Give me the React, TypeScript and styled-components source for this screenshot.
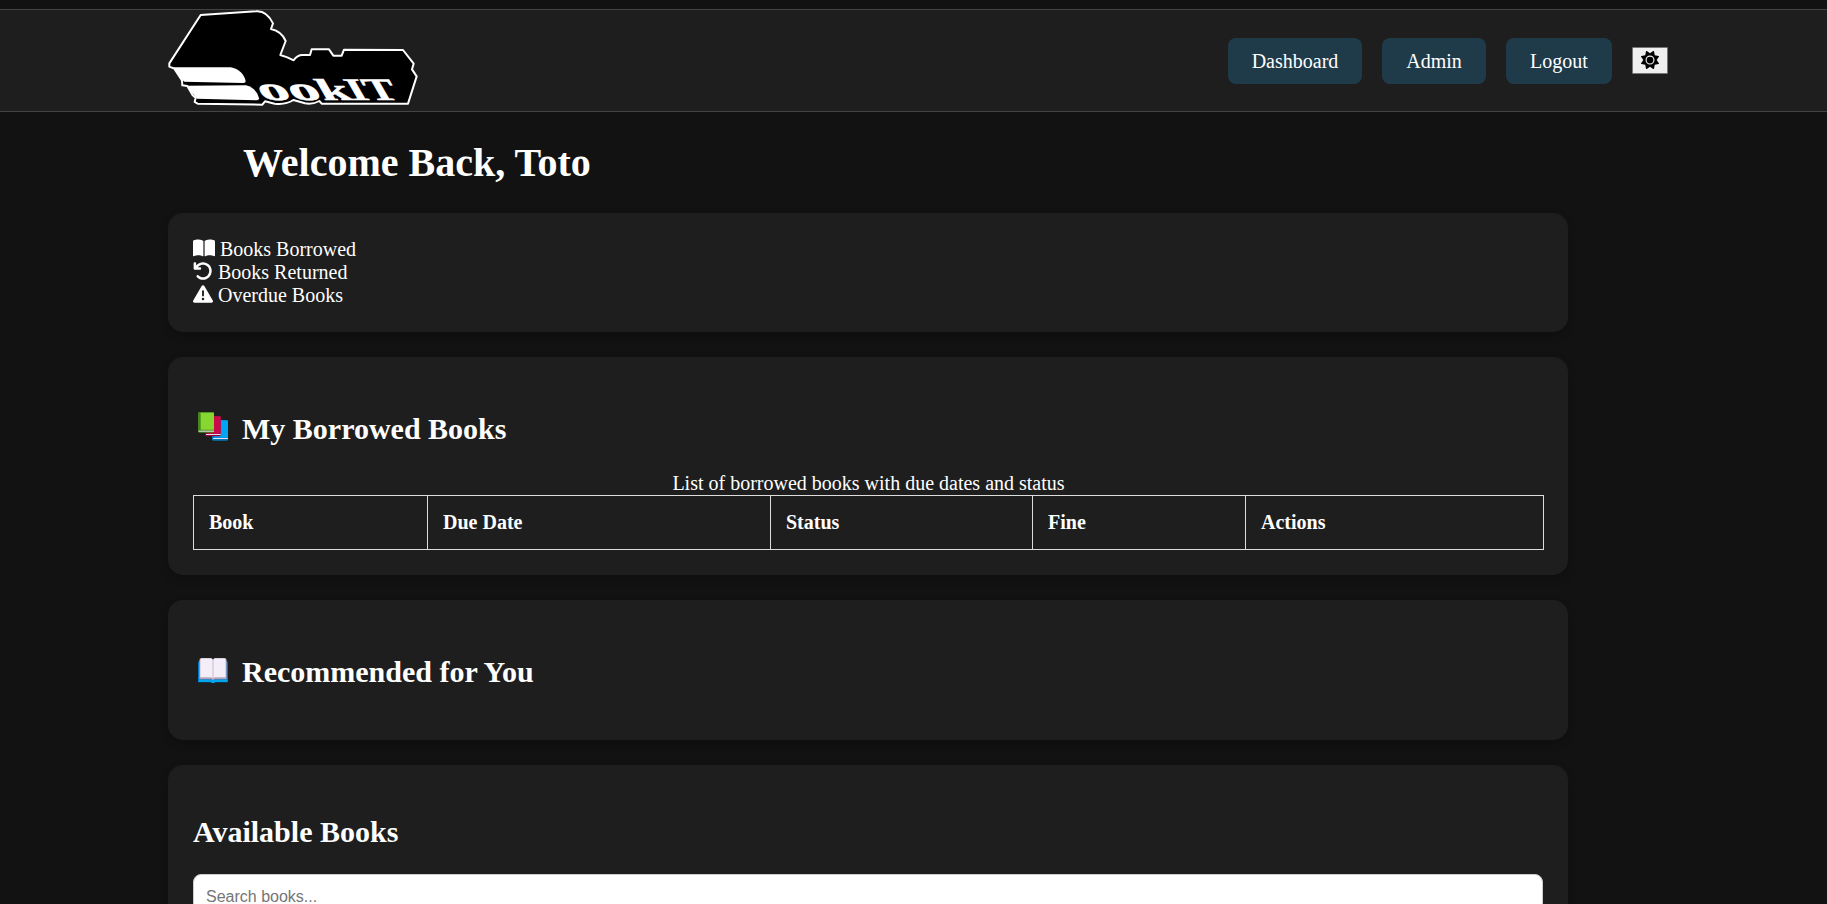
import React from "react";
import styled, { createGlobalStyle } from "styled-components";
import { FaBookOpen, FaArrowRotateLeft, FaTriangleExclamation, FaSun } from "react-icons/fa6";

const GlobalStyle = createGlobalStyle`
  html { background: #121212; }
  body {
    margin: 0;
    background: #121212;
    color: #fff;
    font-family: "Liberation Serif", "Times New Roman", serif;
    font-size: 20px;
    overflow: hidden;
  }
  * { box-sizing: border-box; }
`;

const Page = styled.div`
  height: 904px;
  padding-top: 9px;
  overflow: hidden;
`;

const NavBar = styled.nav`
  display: flex;
  align-items: center;
  justify-content: space-between;
  height: 103px;
  padding: 0 159px 0 168px;
  background: #1e1e1e;
  border: solid #444;
  border-width: 1px 0;
`;

const LogoArt = styled.svg`
  display: block;
  width: 250px;
  height: 101px;
`;

const NavLinks = styled.div`
  display: flex;
  align-items: center;
  gap: 20px;
`;

const NavLink = styled.a<{ $width: number }>`
  display: flex;
  align-items: center;
  justify-content: center;
  width: ${(p) => p.$width}px;
  height: 46px;
  padding-top: 1px;
  border-radius: 8px;
  background: #1f3b4a;
  color: #fff;
  text-decoration: none;
`;

const ThemeToggle = styled.button`
  display: flex;
  align-items: center;
  justify-content: center;
  width: 36px;
  height: 27px;
  padding: 0 0 2px;
  border: 1px solid #767676;
  border-radius: 1px;
  background: #efefef;
  color: #000;
  font-size: 18px;
`;

const Main = styled.main`
  width: 1400px;
  margin-left: 168px;
`;

const Title = styled.h1`
  margin: 0;
  padding: 28px 0 27px 75px;
  font-size: 40px;
  line-height: 46px;
`;

const Panel = styled.section`
  margin-bottom: 25px;
  padding: 25px;
  border-radius: 15px;
  background: #1e1e1e;
  box-shadow: 0 4px 10px rgba(0, 0, 0, 0.2);
`;

const StatLine = styled.div`
  display: flex;
  align-items: center;
  gap: 5px;
  height: 23px;
  line-height: 23px;

  svg {
    flex: none;
    margin-top: -3px;
  }
`;

const Heading = styled.h2<{ $emoji?: boolean }>`
  display: flex;
  align-items: flex-start;
  height: ${(p) => (p.$emoji ? 40 : 34)}px;
  margin: 25px 0;
  padding-top: ${(p) => (p.$emoji ? 5 : 0)}px;
  font-size: 30px;
  line-height: 34px;

  svg {
    flex: none;
    margin: 0 14px 0 5px;
  }
`;

const Table = styled.table`
  width: 1350px;
  table-layout: fixed;
  border-collapse: collapse;

  caption {
    height: 23px;
    line-height: 23px;
  }
`;

const HeadCell = styled.th<{ $width: number }>`
  width: ${(p) => p.$width}px;
  height: 54px;
  padding: 0 15px;
  border: 1px solid #ddd;
  text-align: left;
`;

const SearchInput = styled.input`
  display: block;
  width: 100%;
  height: 46px;
  padding: 0 12px;
  border: 1px solid #ccc;
  border-radius: 8px;
  background: #fff;
  font-family: "Liberation Sans", Arial, sans-serif;
  font-size: 16px;

  &::placeholder { color: #757575; }
`;

const outline =
  "M58 200 L58 190 L152 45 L318 34 C340 32 358 48 369 70 L363 87 C386 92 400 106 407 123 L391 165 L412 172 L431 181 C438 170 446 165 458 165 L480 165 L485 148 L537 148 L550 167 L575 167 L582 149 L759 150 L791 191 L786 208 L800 229 L774 311 L515 311 L508 303 C492 312 478 312 465 310 L430 300 C412 312 390 313 374 311 L345 304 L337 314 L143 311 L134 306 L137 293 L128 286 L112 258 L97 256 L96 241 L73 206 Z";

function Logo() {
  return (
    <LogoArt viewBox="54 30 750 303" role="img" aria-label="BookIT">
      <path d={outline} fill="#000" stroke="#fff" strokeWidth="6" strokeLinejoin="round" />
      <path d="M70 202 H242 C266 205 284 225 287 244 Q287 249 280 249 L103 245 Q87 234 70 202Z" fill="#fff" />
      <path d="M109 257 L288 256 C310 261 323 278 327 295 Q327 301 317 301 L141 296 Z" fill="#fff" />
      <g fill="#fff" stroke="#fff" strokeWidth="1.5" fontFamily="Liberation Serif" fontWeight="700">
        <text transform="translate(340 299) skewX(30)" fontSize="98" textLength="182" lengthAdjust="spacingAndGlyphs">oo</text>
        <text transform="translate(521 299) skewX(30)" fontSize="91" textLength="91" lengthAdjust="spacingAndGlyphs">k</text>
        <text transform="translate(610 299) skewX(30)" fontSize="94" textLength="144" lengthAdjust="spacingAndGlyphs">IT</text>
      </g>
    </LogoArt>
  );
}

function BooksEmoji() {
  return (
    <svg width="30" height="29" viewBox="0 0 90 87" style={undefined}>
      <rect x="42" y="25" width="48" height="61" rx="4" fill="#0078b8" />
      <rect x="48" y="25" width="42" height="52" rx="3" fill="#00a6f4" />
      <rect x="45" y="78" width="45" height="3" fill="#e6dcee" />
      <rect x="21" y="13" width="47" height="60" rx="4" fill="#97003f" />
      <rect x="27" y="13" width="41" height="52" rx="3" fill="#ca0b4a" />
      <rect x="24" y="66" width="44" height="3" fill="#e6dcee" />
      <rect x="0" y="0" width="48" height="62" rx="4" fill="#45861d" />
      <rect x="8" y="2" width="40" height="51" rx="2" fill="#86d72f" />
      <rect x="2" y="56" width="46" height="3" fill="#eee4ee" />
    </svg>
  );
}

function OpenBookEmoji() {
  return (
    <svg width="30" height="29" viewBox="0 0 90 87">
      <path d="M3 19H87Q90 19 90 24V82H52Q45 88 38 82H0V24Q0 19 3 19Z" fill="#0078c8" />
      <path d="M2 74H88V81H52Q45 87 38 81H2Z" fill="#00a6ed" />
      <path d="M4 16Q4 10 10 10H40L45 13L50 10H80Q86 10 86 16V73H50L45 76L40 73H4Z" fill="#b4a4bb" />
      <path d="M7 14Q7 10 11 10H40L44 14V70L39 67H7Z M46 14L50 10H79Q83 10 83 14V67H51L46 70Z" fill="#f3eef8" />
    </svg>
  );
}

const columns = [
  { label: "Book", width: 234 },
  { label: "Due Date", width: 343 },
  { label: "Status", width: 262 },
  { label: "Fine", width: 213 },
  { label: "Actions", width: 298 },
];

export default function App() {
  return (
    <>
      <GlobalStyle />
      <Page>
        <NavBar>
          <Logo />
          <NavLinks>
            <NavLink $width={134}>Dashboard</NavLink>
            <NavLink $width={104}>Admin</NavLink>
            <NavLink $width={106}>Logout</NavLink>
            <ThemeToggle aria-label="Toggle theme"><FaSun /></ThemeToggle>
          </NavLinks>
        </NavBar>
        <Main>
          <Title>Welcome Back, Toto</Title>
          <Panel>
            <StatLine><FaBookOpen width={23} size={22} />Books Borrowed</StatLine>
            <StatLine><FaArrowRotateLeft size={20} />Books Returned</StatLine>
            <StatLine><FaTriangleExclamation size={20} />Overdue Books</StatLine>
          </Panel>
          <Panel>
            <Heading $emoji><BooksEmoji />My Borrowed Books</Heading>
            <Table>
              <caption>List of borrowed books with due dates and status</caption>
              <thead>
                <tr>
                  {columns.map((c) => (
                    <HeadCell key={c.label} $width={c.width}>{c.label}</HeadCell>
                  ))}
                </tr>
              </thead>
            </Table>
          </Panel>
          <Panel>
            <Heading $emoji><OpenBookEmoji />Recommended for You</Heading>
          </Panel>
          <Panel>
            <Heading>Available Books</Heading>
            <SearchInput placeholder="Search books..." />
          </Panel>
        </Main>
      </Page>
    </>
  );
}
